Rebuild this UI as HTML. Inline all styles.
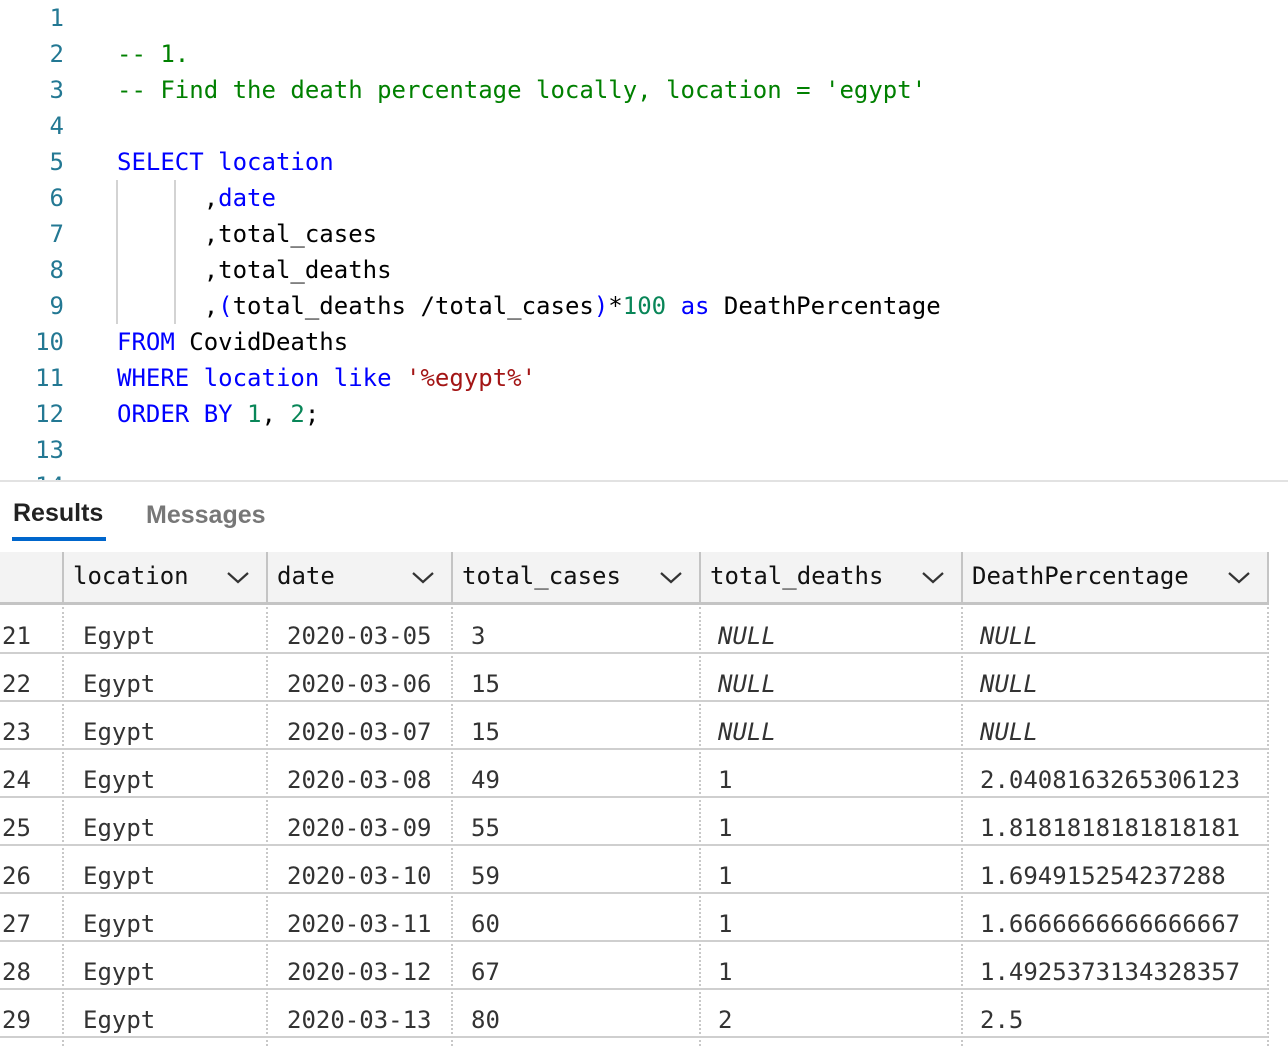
<!DOCTYPE html>
<html><head><meta charset="utf-8"><style>
*{margin:0;padding:0;box-sizing:border-box}
body{width:1288px;height:1046px;background:#fff;overflow:hidden;position:relative;font-family:"DejaVu Sans Mono","Liberation Mono",monospace;font-size:24px}
.ed{position:absolute;left:0;top:0;width:1288px;height:481px;overflow:hidden}
.ln{position:absolute;left:0;width:64px;text-align:right;color:#237893;height:36px;line-height:36px}
.cl{position:absolute;left:117px;height:36px;line-height:36px;white-space:pre;color:#000}
.k{color:#0000ff}.c{color:#008000}.s{color:#a31515}.n{color:#098658}
.guide{position:absolute;width:2px;background:#d3d3d3;top:180px;height:144px}
.sep{position:absolute;left:0;top:480px;width:1288px;height:2px;background:#e2e2e2}
.tab{position:absolute;top:496px;font-family:"Liberation Sans",sans-serif;font-size:25px;line-height:34px;font-weight:bold}
.hdr{position:absolute;left:0;top:552px;width:1269px;height:53px;background:#f3f3f3;border-bottom:3px solid #c4c4c4;border-right:2px solid #c4c4c4}
.hc{position:absolute;top:0;height:50px;line-height:48px;color:#111;border-left:2px solid #c4c4c4;padding-left:9px}
.chev{position:absolute;top:17px;width:24px;height:16px}
.row{position:absolute;left:0;width:1268px;height:48px;border-bottom:2px solid #cfcfcf}
.cell{position:absolute;top:6px;line-height:48px;color:#333;white-space:pre}
.i{font-style:italic}
.vd{position:absolute;top:607px;height:439px;border-left:2px dotted #c8c8c8}
</style></head><body>
<div class="ed">
<div class="ln" style="top:0">1</div>
<div class="ln" style="top:36px">2</div>
<div class="ln" style="top:72px">3</div>
<div class="ln" style="top:108px">4</div>
<div class="ln" style="top:144px">5</div>
<div class="ln" style="top:180px">6</div>
<div class="ln" style="top:216px">7</div>
<div class="ln" style="top:252px">8</div>
<div class="ln" style="top:288px">9</div>
<div class="ln" style="top:324px">10</div>
<div class="ln" style="top:360px">11</div>
<div class="ln" style="top:396px">12</div>
<div class="ln" style="top:432px">13</div>
<div class="ln" style="top:468px">14</div>
<div class="guide" style="left:116px"></div>
<div class="guide" style="left:174px"></div>
<div class="cl c" style="top:36px">-- 1.</div>
<div class="cl c" style="top:72px">-- Find the death percentage locally, location = 'egypt'</div>
<div class="cl" style="top:144px"><span class="k">SELECT location</span></div>
<div class="cl" style="top:180px">      ,<span class="k">date</span></div>
<div class="cl" style="top:216px">      ,total_cases</div>
<div class="cl" style="top:252px">      ,total_deaths</div>
<div class="cl" style="top:288px">      ,<span class="k">(</span>total_deaths /total_cases<span class="k">)</span>*<span class="n">100</span> <span class="k">as</span> DeathPercentage</div>
<div class="cl" style="top:324px"><span class="k">FROM</span> CovidDeaths</div>
<div class="cl" style="top:360px"><span class="k">WHERE location like</span> <span class="s">'%egypt%'</span></div>
<div class="cl" style="top:396px"><span class="k">ORDER BY</span> <span class="n">1</span>, <span class="n">2</span>;</div>
</div>
<div class="sep"></div>
<div class="tab" style="left:13px;color:#222">Results</div>
<div style="position:absolute;left:12px;top:537px;width:94px;height:4px;background:#0066cc"></div>
<div class="tab" style="left:146px;color:#777;top:498px">Messages</div>

<div class="hdr">
<div class="hc" style="left:62px;width:205px">location</div>
<div class="hc" style="left:266px;width:186px">date</div>
<div class="hc" style="left:451px;width:249px">total_cases</div>
<div class="hc" style="left:699px;width:263px">total_deaths</div>
<div class="hc" style="left:961px;width:307px">DeathPercentage</div>
<svg class="chev" style="left:226px" viewBox="0 0 24 16"><path d="M2 4l10 9 10-9" stroke="#333" stroke-width="2.2" fill="none"/></svg>
<svg class="chev" style="left:411px" viewBox="0 0 24 16"><path d="M2 4l10 9 10-9" stroke="#333" stroke-width="2.2" fill="none"/></svg>
<svg class="chev" style="left:659px" viewBox="0 0 24 16"><path d="M2 4l10 9 10-9" stroke="#333" stroke-width="2.2" fill="none"/></svg>
<svg class="chev" style="left:921px" viewBox="0 0 24 16"><path d="M2 4l10 9 10-9" stroke="#333" stroke-width="2.2" fill="none"/></svg>
<svg class="chev" style="left:1227px" viewBox="0 0 24 16"><path d="M2 4l10 9 10-9" stroke="#333" stroke-width="2.2" fill="none"/></svg>
</div>

<div class="vd" style="left:62px"></div>
<div class="vd" style="left:266px"></div>
<div class="vd" style="left:451px"></div>
<div class="vd" style="left:699px"></div>
<div class="vd" style="left:961px"></div>
<div class="vd" style="left:1267px"></div>

<div class="row" style="top:606px"><span class="cell" style="left:2px">21</span><span class="cell" style="left:83px">Egypt</span><span class="cell" style="left:287px">2020-03-05</span><span class="cell" style="left:471px">3</span><span class="cell i" style="left:718px">NULL</span><span class="cell i" style="left:980px">NULL</span></div>
<div class="row" style="top:654px"><span class="cell" style="left:2px">22</span><span class="cell" style="left:83px">Egypt</span><span class="cell" style="left:287px">2020-03-06</span><span class="cell" style="left:471px">15</span><span class="cell i" style="left:718px">NULL</span><span class="cell i" style="left:980px">NULL</span></div>
<div class="row" style="top:702px"><span class="cell" style="left:2px">23</span><span class="cell" style="left:83px">Egypt</span><span class="cell" style="left:287px">2020-03-07</span><span class="cell" style="left:471px">15</span><span class="cell i" style="left:718px">NULL</span><span class="cell i" style="left:980px">NULL</span></div>
<div class="row" style="top:750px"><span class="cell" style="left:2px">24</span><span class="cell" style="left:83px">Egypt</span><span class="cell" style="left:287px">2020-03-08</span><span class="cell" style="left:471px">49</span><span class="cell" style="left:718px">1</span><span class="cell" style="left:980px">2.0408163265306123</span></div>
<div class="row" style="top:798px"><span class="cell" style="left:2px">25</span><span class="cell" style="left:83px">Egypt</span><span class="cell" style="left:287px">2020-03-09</span><span class="cell" style="left:471px">55</span><span class="cell" style="left:718px">1</span><span class="cell" style="left:980px">1.8181818181818181</span></div>
<div class="row" style="top:846px"><span class="cell" style="left:2px">26</span><span class="cell" style="left:83px">Egypt</span><span class="cell" style="left:287px">2020-03-10</span><span class="cell" style="left:471px">59</span><span class="cell" style="left:718px">1</span><span class="cell" style="left:980px">1.694915254237288</span></div>
<div class="row" style="top:894px"><span class="cell" style="left:2px">27</span><span class="cell" style="left:83px">Egypt</span><span class="cell" style="left:287px">2020-03-11</span><span class="cell" style="left:471px">60</span><span class="cell" style="left:718px">1</span><span class="cell" style="left:980px">1.6666666666666667</span></div>
<div class="row" style="top:942px"><span class="cell" style="left:2px">28</span><span class="cell" style="left:83px">Egypt</span><span class="cell" style="left:287px">2020-03-12</span><span class="cell" style="left:471px">67</span><span class="cell" style="left:718px">1</span><span class="cell" style="left:980px">1.4925373134328357</span></div>
<div class="row" style="top:990px"><span class="cell" style="left:2px">29</span><span class="cell" style="left:83px">Egypt</span><span class="cell" style="left:287px">2020-03-13</span><span class="cell" style="left:471px">80</span><span class="cell" style="left:718px">2</span><span class="cell" style="left:980px">2.5</span></div>
</body></html>
